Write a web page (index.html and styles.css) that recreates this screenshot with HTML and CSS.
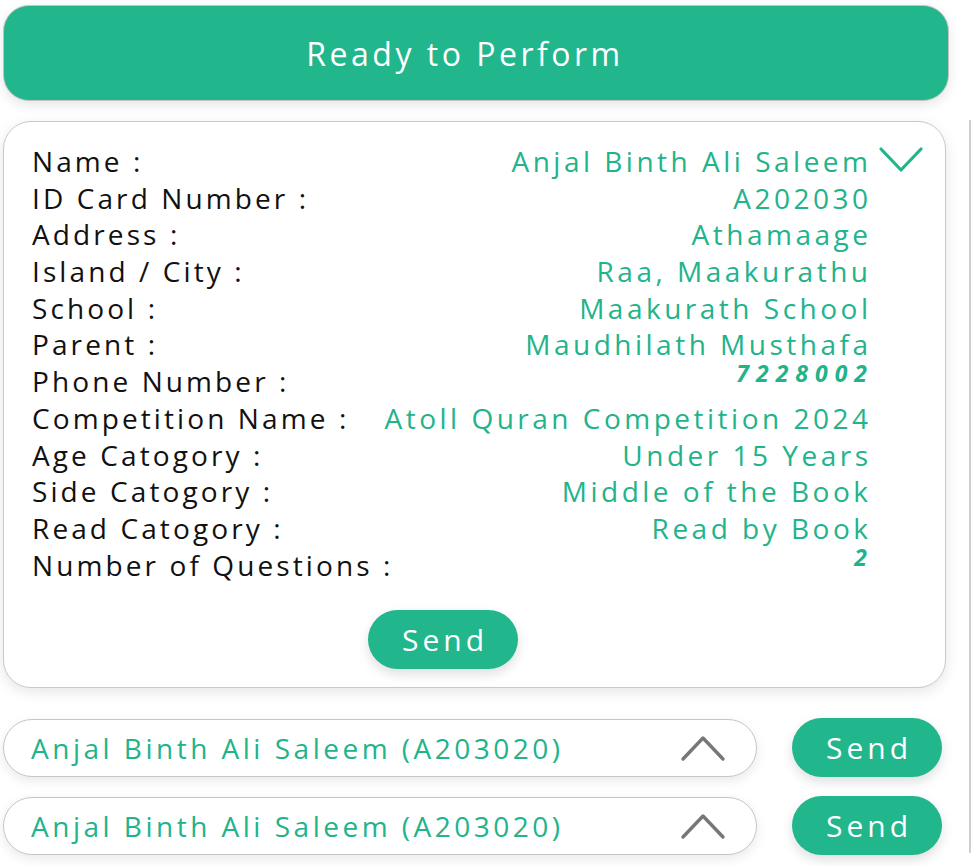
FILE: index.html
```html
<!DOCTYPE html>
<html>
<head>
<meta charset="utf-8">
<link rel="stylesheet" href="styles.css">
</head>
<body>
<div class="page">
  <main class="main">
    <div class="header">Ready to Perform</div>

    <section class="card">
      <div class="details">
        <div class="row"><span class="label">Name :</span><span class="value">Anjal Binth Ali Saleem</span><span class="slot"><svg class="chev-down" viewBox="0 0 46 30" width="46" height="30"><path d="M3 4 L23 25 L43 4" fill="none" stroke="#22b58c" stroke-width="3.2" stroke-linecap="round" stroke-linejoin="round"/></svg></span></div>
        <div class="row"><span class="label">ID Card Number :</span><span class="value">A202030</span><span class="slot"></span></div>
        <div class="row"><span class="label">Address :</span><span class="value">Athamaage</span><span class="slot"></span></div>
        <div class="row"><span class="label">Island / City :</span><span class="value">Raa, Maakurathu</span><span class="slot"></span></div>
        <div class="row"><span class="label">School :</span><span class="value">Maakurath School</span><span class="slot"></span></div>
        <div class="row"><span class="label">Parent :</span><span class="value">Maudhilath Musthafa</span><span class="slot"></span></div>
        <div class="row"><span class="label">Phone Number :</span><span class="value num">7228002</span><span class="slot"></span></div>
        <div class="row"><span class="label">Competition Name :</span><span class="value">Atoll Quran Competition 2024</span><span class="slot"></span></div>
        <div class="row"><span class="label">Age Catogory :</span><span class="value">Under 15 Years</span><span class="slot"></span></div>
        <div class="row"><span class="label">Side Catogory :</span><span class="value">Middle of the Book</span><span class="slot"></span></div>
        <div class="row"><span class="label">Read Catogory :</span><span class="value">Read by Book</span><span class="slot"></span></div>
        <div class="row"><span class="label">Number of Questions :</span><span class="value num">2</span><span class="slot"></span></div>
      </div>
      <div class="actions"><button class="send">Send</button></div>
    </section>

    <div class="item">
      <div class="pill"><span class="pill-text">Anjal Binth Ali Saleem (A203020)</span><svg class="chev-up" viewBox="0 0 46 30" width="46" height="30"><path d="M3 26 L23 5 L43 26" fill="none" stroke="#777" stroke-width="3.4" stroke-linecap="round" stroke-linejoin="round"/></svg></div>
      <button class="send">Send</button>
    </div>
    <div class="item item2">
      <div class="pill"><span class="pill-text">Anjal Binth Ali Saleem (A203020)</span><svg class="chev-up" viewBox="0 0 46 30" width="46" height="30"><path d="M3 26 L23 5 L43 26" fill="none" stroke="#777" stroke-width="3.4" stroke-linecap="round" stroke-linejoin="round"/></svg></div>
      <button class="send">Send</button>
    </div>
  </main>
  <div class="rail"></div>
</div>
</body>
</html>
```

FILE: styles.css
```css
* { box-sizing: border-box; }

html, body {
  margin: 0;
  padding: 0;
  background: #ffffff;
}

body {
  font-family: "Open Sans", "Noto Sans", sans-serif;
  color: #111;
  width: 972px;
  height: 866px;
  overflow: hidden;
}

.page {
  display: flex;
  align-items: flex-start;
}

.main {
  width: 946px;
  margin-left: 3px;
  padding-top: 5px;
}

.header {
  height: 96px;
  border-radius: 26px;
  background: #21b68c;
  border: 1px solid #c4c4c4;
  box-shadow: 0 4px 12px rgba(0, 0, 0, 0.10);
  color: #fff;
  font-size: 32px;
  letter-spacing: 3.5px;
  display: flex;
  align-items: center;
  justify-content: center;
  padding-right: 22px;
}

.card {
  margin-top: 20px;
  width: 943px;
  height: 567px;
  border: 1px solid #c9c9c9;
  border-radius: 28px;
  background: #fff;
  box-shadow: 0 4px 14px rgba(0, 0, 0, 0.10);
  padding: 21px 21px 0 28px;
}

.details {
  display: flex;
  flex-direction: column;
}

.row {
  display: flex;
  align-items: flex-start;
  height: 36.7px;
  line-height: 36.7px;
  font-size: 28px;
  white-space: nowrap;
}

.label {
  color: #111;
  letter-spacing: 3.1px;
}

.value {
  margin-left: auto;
  color: #22b38b;
  letter-spacing: 3.5px;
  margin-right: -3.5px;
}

.value.num {
  font-size: 23px;
  line-height: 20px;
  font-weight: 700;
  font-style: italic;
  letter-spacing: 7px;
  margin-right: -6px;
}

.slot {
  width: 56px;
  flex: none;
  display: flex;
  justify-content: flex-end;
}

.chev-down {
  display: block;
  margin-top: 2px;
}

.actions {
  display: flex;
  justify-content: center;
  margin-top: 27px;
  padding-right: 70px;
}

.send {
  width: 150px;
  height: 59px;
  border: none;
  border-radius: 30px;
  background: #22b68d;
  color: #fff;
  font-family: "Open Sans", "Noto Sans", sans-serif;
  font-size: 30px;
  letter-spacing: 4px;
  box-shadow: 0 5px 12px rgba(0, 0, 0, 0.13);
  padding: 0 0 0 4px;
  cursor: pointer;
}

.item {
  display: flex;
  align-items: center;
  margin-top: 30px;
}

.item2 { margin-top: 19px; }

.pill {
  width: 754px;
  height: 58px;
  border: 1px solid #c6c6c6;
  border-radius: 29px;
  background: #fff;
  box-shadow: 0 4px 12px rgba(0, 0, 0, 0.09);
  display: flex;
  align-items: center;
  padding: 0 30px 0 27px;
}

.pill-text {
  color: #22b38b;
  font-size: 28px;
  letter-spacing: 3.5px;
  white-space: nowrap;
}

.chev-up {
  margin-left: auto;
  display: block;
}

.item .send { margin-left: 35px; }

.rail {
  margin-left: 20px;
  margin-top: 120px;
  width: 2px;
  height: 733px;
  background: #cfcfcf;
}
```
